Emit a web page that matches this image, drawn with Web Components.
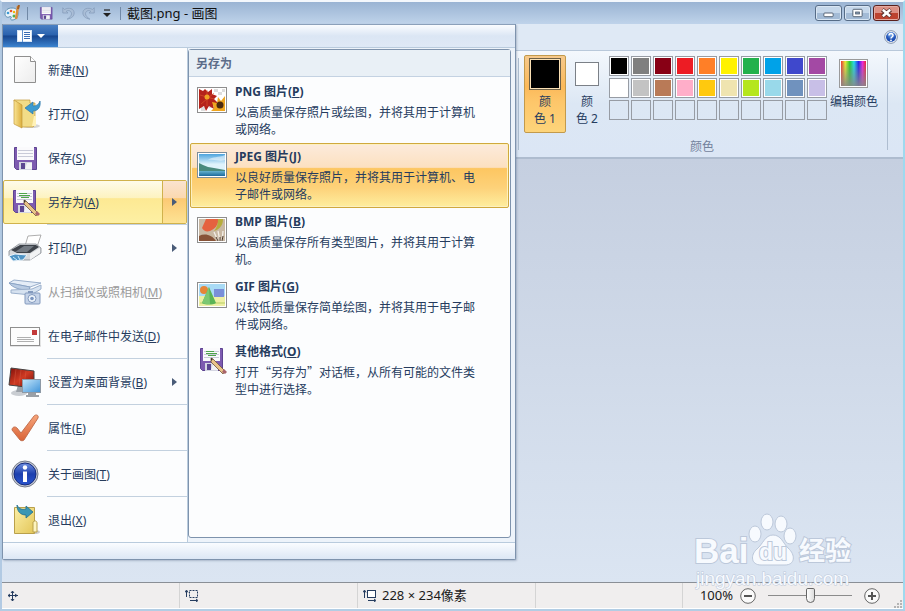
<!DOCTYPE html>
<html lang="zh-CN">
<head>
<meta charset="utf-8">
<title>截图.png - 画图</title>
<style>
    body {
        margin: 0;
        font: 12px/17px "Noto Sans", "Noto Sans CJK SC", sans-serif;
        color: #263c5e;
    }
</style>
</head>
<body>

<paint-window>
    <title-bar slot="title">截图.png - 画图</title-bar>
    <ribbon-bar slot="ribbon">
        <file-menu slot="menu">
            <menu-entry icon="new">新建(<u>N</u>)</menu-entry>
            <menu-entry icon="open">打开(<u>O</u>)</menu-entry>
            <menu-entry icon="save">保存(<u>S</u>)</menu-entry>
            <menu-entry icon="save-as" arrow active>另存为(<u>A</u>)</menu-entry>
            <menu-entry icon="print" arrow divided>打印(<u>P</u>)</menu-entry>
            <menu-entry icon="scanner" disabled>从扫描仪或照相机(<u>M</u>)</menu-entry>
            <menu-entry icon="mail">在电子邮件中发送(<u>D</u>)</menu-entry>
            <menu-entry icon="desktop" arrow divided>设置为桌面背景(<u>B</u>)</menu-entry>
            <menu-entry icon="check" divided>属性(<u>E</u>)</menu-entry>
            <menu-entry icon="about" divided>关于画图(<u>T</u>)</menu-entry>
            <menu-entry icon="exit" divided>退出(<u>X</u>)</menu-entry>

            <span slot="heading">另存为</span>
            <format-option slot="format" icon="png">
                <span slot="name">PNG 图片(<u>P</u>)</span>
                以高质量保存照片或绘图，并将其用于计算机或网络。
            </format-option>
            <format-option slot="format" icon="jpeg" active>
                <span slot="name">JPEG 图片(<u>J</u>)</span>
                以良好质量保存照片，并将其用于计算机、电子邮件或网络。
            </format-option>
            <format-option slot="format" icon="bmp">
                <span slot="name">BMP 图片(<u>B</u>)</span>
                以高质量保存所有类型图片，并将其用于计算机。
            </format-option>
            <format-option slot="format" icon="gif">
                <span slot="name">GIF 图片(<u>G</u>)</span>
                以较低质量保存简单绘图，并将其用于电子邮件或网络。
            </format-option>
            <format-option slot="format" icon="save-as">
                <span slot="name">其他格式(<u>O</u>)</span>
                打开“另存为”对话框，从所有可能的文件类型中进行选择。
            </format-option>
        </file-menu>
        <color-group>颜色</color-group>
    </ribbon-bar>
    <status-bar slot="status" zoom="100">228 × 234像素</status-bar>
    <site-mark slot="mark"></site-mark>
</paint-window>

<script>
const FLOPPY = `
    <path d="M4.500 4.500h22v22h-20l-2-2z" fill="#7d5bb0" stroke="#5d4391"/>
    <path d="M7 4h17v13H7z" fill="#fafafc"/>
    <path d="M8 7.500h15M8 10.500h15M8 13.500h15" stroke="#c9cbd8"/>
    <path d="M9 19h13v8H9z" fill="#d4d6e2"/>
    <path d="M11 20h4v6h-4z" fill="#5b4691"/>
    <path d="M17 20h5v6h-7z" fill="#fff" opacity=".7"/>`;

// Every drawing is [viewBox width, viewBox height, markup]
const ICONS = {
    "app": [16, 16, `
        <path d="M1 9C1 5 4 3 8 3s6 2 6 6-3 6-6 6c-1 0-2-1-1-2s0-2-2-1-4-1-4-3z" fill="#e9f3fa" stroke="#5f8fb0"/>
        <circle cx="4" cy="8" r="1.3" fill="#3c9ad5"/><circle cx="7" cy="6" r="1.3" fill="#e4572e"/>
        <circle cx="10" cy="7" r="1.2" fill="#f4b400"/><circle cx="10" cy="11" r="1.5" fill="#4caf50"/>
        <path d="M14 1l-2 13" stroke="#d98e3f" stroke-width="2.4"/><path d="M15 0l-1 4" stroke="#a55f20" stroke-width="2"/>`],
    "quick-save": [30, 30, FLOPPY],
    "undo": [16, 16, `<path d="M2 2v6h6L6 6c3-2 6 0 6 3 0 2-2 4-5 6 6-1 8-4 8-7 0-5-6-7-11-4z" fill="#a9bdd6" stroke="#8299b8" stroke-width=".8"/>`],
    "redo": [16, 16, `<path d="M14 2v6H8l2-2C7 4 4 6 4 9c0 2 2 4 5 6-6-1-8-4-8-7 0-5 6-7 11-4z" fill="#a9bdd6" stroke="#8299b8" stroke-width=".8"/>`],
    "customize": [8, 8, `<path d="M1 1h6" stroke="#222" stroke-width="1.2"/><path d="M0 4h8L4 8z" fill="#222"/>`],
    "minimize": [27, 15, `<rect x="8.500" y="7.500" width="10" height="4" rx="1" fill="#fff" stroke="#4c5a6c"/>`],
    "maximize": [27, 15, `<rect x="8.500" y="3.500" width="10" height="8" rx="1" fill="#fff" stroke="#4c5a6c"/><rect x="11.500" y="6.500" width="4" height="2" fill="#9db4cf" stroke="#4c5a6c"/>`],
    "close": [27, 15, `<path d="M9 4l9 7M18 4l-9 7" stroke="#5c3230" stroke-width="4.500"/><path d="M9.500 4l8 7M17.500 4l-8 7" stroke="#fff" stroke-width="2.600"/>`],
    "file": [28, 12, `
        <rect x=".5" y=".5" width="14" height="11" fill="#fff" stroke="#d7e6f7"/>
        <path d="M5.500 0v12" stroke="#5f90cc"/>
        <path d="M7 2.500h6M7 4.500h6M7 6.500h6M7 8.500h6" stroke="#3a6db4"/>
        <path d="M20 4h8l-4 4z" fill="#fff"/>`],
    "help": [14, 14, `
        <defs><radialGradient id="g" cy=".25"><stop stop-color="#7fb1f0"/><stop offset="1" stop-color="#1d4fb4"/></radialGradient></defs>
        <circle cx="7" cy="7" r="6.300" fill="#fff" stroke="#7e8fa8"/><circle cx="7" cy="7" r="5" fill="url(#g)"/>
        <path d="M5 5.500c0-3 4.200-2.600 4 0C9 7 7 7 7 8.500" fill="none" stroke="#fff" stroke-width="1.500"/><circle cx="7" cy="10.400" r=".9" fill="#fff"/>`],
    "new": [32, 32, `
        <defs><linearGradient id="g" x2="1" y2="1"><stop stop-color="#fff"/><stop offset="1" stop-color="#ececec"/></linearGradient></defs>
        <path d="M5.500 2.500h16l5 5v21h-21z" fill="url(#g)" stroke="#8f8f8f"/>
        <path d="M21.500 2.500v5h5" fill="#fff" stroke="#8f8f8f"/>`],
    "open": [32, 32, `
        <defs><linearGradient id="g" x2="1"><stop stop-color="#f9e596"/><stop offset="1" stop-color="#dcae3d"/></linearGradient></defs>
        <ellipse cx="22" cy="28" rx="9" ry="2" fill="#999" opacity=".4"/>
        <path d="M5 2h16v3h5v22l-2 2H12z" fill="#f2dc87" stroke="#c39a3b" stroke-width=".7"/>
        <path d="M5 2l8 5v23l-8-4z" fill="url(#g)" stroke="#c39a3b" stroke-width=".7"/>
        <path d="M25 18h2v10h-4z" fill="#fff2b8"/>
        <path d="M16 10l8-6v4c4 0 6-2 7-5 1 6-2 10-7 10v3z" fill="#3c9bd0" stroke="#2b76a8" stroke-width=".7"/>`],
    "save": [30, 30, FLOPPY],
    "save-as": [32, 32, `${FLOPPY}
        <path d="M10 9.500h11M12 11.500h8M10 7.500h8" stroke="#4ea54b"/>
        <path d="M15 14l2 1 12 12-2 3-12-12z" fill="#e9c489" stroke="#6f543a" stroke-width=".8"/>
        <path d="M15 14l2 1-2 2z" fill="#3d342d"/><path d="M28 25l3 3-2 2-3-2z" fill="#a9646b"/>`],
    "print": [34, 32, `
        <path d="M17 14L20 4l13-1-4 12z" fill="#fff" stroke="#999" stroke-width=".8"/>
        <path d="M1 19l10-7h17l5 4v5l-11 7H8L1 24z" fill="#d6d9dc" stroke="#777d84" stroke-width=".7"/>
        <path d="M3 18l9-5h16l3 2-9 6H9z" fill="#3e434a"/>
        <path d="M7 20l9-6h10l-7 6z" fill="#737a82"/>
        <path d="M22 22l10-6v5l-10 7z" fill="#f2f3f4"/>
        <path d="M1 24l6-2 12 1-4 5-10 1z" fill="#4f94c5" stroke="#e8f2fa"/>
        <path d="M5 25l4 3M10 24l2 4" stroke="#c9ecff"/>`],
    "scanner": [34, 32, `
        <path d="M1 7l5-3 27 3-11 4z" fill="#e5edf7" stroke="#9bb0cc"/>
        <path d="M1 7l6 1 15 3-1 3C12 14 5 12 1 7z" fill="#bacce3" stroke="#8ba4c5"/>
        <path d="M3 14l21-1 9-4v4l-10 6-20-2z" fill="#d6e2f0" stroke="#9bb0cc"/>
        <rect x="17" y="17" width="15" height="11" rx="1" fill="#c5d3e8" stroke="#8299bd"/>
        <path d="M20 15h5v2h-5z" fill="#8299bd"/>
        <circle cx="24" cy="22.500" r="4" fill="#eef4fb" stroke="#8299bd"/><circle cx="24" cy="22.500" r="1.800" fill="#7a95bf"/>`],
    "mail": [32, 32, `
        <path d="M1 26h31V9" fill="none" stroke="#ccc"/>
        <rect x="1.500" y="7.500" width="29" height="18" fill="#fdfdfd" stroke="#8f8f8f"/>
        <rect x="23" y="10" width="5" height="5" fill="#c33a3a"/>
        <path d="M8 17.500h14M8 19.500h17M8 21.500h17" stroke="#b0b0b0"/>`],
    "desktop": [34, 32, `
        <defs><linearGradient id="r" x2="1" y2="1"><stop stop-color="#7e0f0a"/><stop offset=".5" stop-color="#cf3a22"/><stop offset="1" stop-color="#6e0b08"/></linearGradient>
        <linearGradient id="b" x2="1" y2="1"><stop stop-color="#c4e6fb"/><stop offset="1" stop-color="#3f93d9"/></linearGradient></defs>
        <ellipse cx="11" cy="27" rx="8" ry="3" fill="#c9cdd2"/>
        <path d="M10 19l6 2v5H8z" fill="#9aa0a7"/>
        <path d="M3 2l23 3v17L1 19z" fill="url(#r)" stroke="#444"/>
        <path d="M8 3l-2 16M13 4l-2 16M18 5l-2 15" stroke="#e06a4e" opacity=".35"/>
        <path d="M20 26h8v3h3v2H18v-2h2z" fill="#9aa0a7"/>
        <rect x="14.500" y="13.500" width="18" height="13" fill="url(#b)" stroke="#8d99a6"/>`],
    "check": [32, 32, `
        <defs><linearGradient id="g" x2="0" y2="1"><stop stop-color="#f7a67c"/><stop offset="1" stop-color="#d96236"/></linearGradient></defs>
        <path d="M3 18c0-3 3-4 5-2l4 5L25 4c2-2 5-1 4 2L15 28c-1 1-3 1-4 0z" fill="url(#g)" stroke="#bd6a48" stroke-width=".9"/>`],
    "about": [32, 32, `
        <defs><linearGradient id="g" x2="0" y2="1"><stop stop-color="#6f8fe0"/><stop offset=".5" stop-color="#1c3fae"/><stop offset="1" stop-color="#2a55cf"/></linearGradient></defs>
        <circle cx="16" cy="16" r="13" fill="#c4c8d2" stroke="#777d8c"/><circle cx="16" cy="16" r="11" fill="url(#g)" stroke="#142a7c"/>
        <circle cx="16" cy="9.500" r="2.200" fill="#fff"/><path d="M14 13.500h4V24h-4z" fill="#fff"/>`],
    "exit": [32, 32, `
        <defs><linearGradient id="g" x2="1" y2="1"><stop stop-color="#fbefa6"/><stop offset="1" stop-color="#e3c659"/></linearGradient></defs>
        <ellipse cx="25" cy="28" rx="6" ry="2" fill="#999" opacity=".5"/>
        <path d="M5.500 3.500h20v26h-20z" fill="url(#g)" stroke="#b9a04b"/>
        <path d="M24 28V18c2-2 4-1 4 1v9z" fill="#fdf4bf" stroke="#b9a04b"/>
        <path d="M8 1c2 4 5 5 9 4V2l7 6-7 6v-3C11 11 8 7 8 1z" fill="#3b97b4" stroke="#236e8b" stroke-width=".8"/>`],
    "png": [30, 26, `
        <rect x=".5" y=".5" width="29" height="25" fill="#fff" stroke="#8e8e8e"/>
        <path d="M17 2h4v3h-4zM25 2h3v3h-3zM21 5h4v3h-4zM12 18h4v3h-4zM4 20h4v4H4z" fill="#ddd"/>
        <path d="M2 2l4 2 2-2 3 3 4-3v5l5 2-3 3 4 4-5 1 1 5-5-3-3 5-2-5-5 3z" fill="#b5231b"/>
        <path d="M3 8l14 4M10 3v16M4 17l13-11" stroke="#dd5a2c" stroke-width=".6"/>
        <circle cx="10" cy="10" r="2.500" fill="#f0a324"/>
        <path d="M15 15l5 1 1-6 3 4 4-5v15H14l3-3z" fill="#efa51e"/>
        <circle cx="23" cy="18" r="3.500" fill="#4b2a10"/>`],
    "jpeg": [30, 26, `
        <defs><linearGradient id="g" x2="0" y2="1"><stop stop-color="#4da4de"/><stop offset=".6" stop-color="#dff3fb"/></linearGradient>
        <linearGradient id="w" x2="0" y2="1"><stop stop-color="#74c0d8"/><stop offset="1" stop-color="#1c6a9c"/></linearGradient></defs>
        <rect x=".5" y=".5" width="29" height="25" fill="#fff" stroke="#7d8d99"/>
        <path d="M2 2h26v17H2z" fill="url(#g)"/><path d="M2 18h26v6H2z" fill="url(#w)"/>
        <path d="M11 8c5-4 10-2 17-5v5c-6 2-9-1-17 0z" fill="#fff" opacity=".5"/>
        <path d="M2 11l4 2 5 2 6 1 11 2v1H2z" fill="#4a8a7e"/>`],
    "bmp": [30, 26, `
        <rect x=".5" y=".5" width="29" height="25" fill="#fff" stroke="#8e8e8e"/>
        <path d="M2 2h26v22H2z" fill="#c9b9a4"/>
        <path d="M9 2h12c1 5-3 10-8 12-4 1-6 0-8-3z" fill="#e5623f"/>
        <path d="M21 2h5c0 6-3 10-9 12 3-4 4-7 4-12z" fill="#b7ad3d"/>
        <path d="M2 19c6-3 13-1 17 5H2z" fill="#875338"/>
        <path d="M17 15l4 9M21 14l2 10M26 14l-1 10" stroke="#f3efe8" stroke-width="1.300"/>
        <path d="M19 20l2 4M23 20v4M26 19l-1 5" stroke="#4a3628"/>`],
    "gif": [30, 26, `
        <rect x=".5" y=".5" width="29" height="25" fill="#fff" stroke="#8e8e8e"/>
        <path d="M2 2h26v13H2z" fill="#a9dbf5"/><path d="M2 14h26v10H2z" fill="#eef0a4"/>
        <path d="M3 20h25v2H3z" fill="#d3df84"/>
        <path d="M17 7h10v8H17z" fill="#7a8fd8"/><circle cx="7" cy="8" r="4" fill="#e58538"/>
        <path d="M12 5l7 16c-3 2-11 2-14 0z" fill="#5bb455"/><path d="M12 5l1 17c-3 0-6 0-8-1z" fill="#7cc872"/>`],
    "spectrum": [30, 30, `
        <defs><linearGradient id="h" x2="1"><stop stop-color="#e33"/><stop offset=".17" stop-color="#ee3"/><stop offset=".35" stop-color="#2c3"/><stop offset=".52" stop-color="#2de"/><stop offset=".7" stop-color="#22e"/><stop offset=".86" stop-color="#e2d"/><stop offset="1" stop-color="#e23"/></linearGradient>
        <linearGradient id="v" x2="0" y2="1"><stop stop-color="#888" stop-opacity="0"/><stop offset="1" stop-color="#888" stop-opacity=".9"/></linearGradient></defs>
        <rect x=".5" y=".5" width="28" height="28" fill="#fff" stroke="#9a9a9a"/>
        <path d="M2 2h25v25H2z" fill="url(#h)"/><path d="M2 2h25v25H2z" fill="url(#v)"/>`],
    "cursor": [12, 12, `<path d="M5.500 1v10M1 5.500h10" stroke="#253c5f"/><path d="M4 3l1.500-2L7 3M4 9l1.500 2L7 9M3 4L1 5.500 3 7M8 4l2 1.500L8 7" stroke="#253c5f"/>`],
    "selection": [14, 13, `<path d="M1.500 2v6M0 3.500L1.500 1 3 3.500M5 11.500h7M11 10l2 1.500L11 13" stroke="#253c5f"/><rect x="4.500" y="1.500" width="8" height="7" stroke="#253c5f" stroke-dasharray="2 1"/>`],
    "size": [14, 13, `<path d="M1.500 2v7M0 3.500L1.500 1 3 3.500M5 11.500h7M11 10l2 1.500L11 13" stroke="#253c5f"/><rect x="4.500" y="1.500" width="8" height="7" fill="#fff" stroke="#253c5f"/>`],
    "minus": [16, 16, `<circle cx="8" cy="8" r="7.300" fill="#fafafa" stroke="#666"/><path d="M4 7h8v2H4z" fill="#555"/>`],
    "plus": [16, 16, `<circle cx="8" cy="8" r="7.300" fill="#fafafa" stroke="#666"/><path d="M4 7h3V4h2v3h3v2H9v3H7V9H4z" fill="#555"/>`],
    "arrow": [5, 8, `<path d="M0 0l5 4-5 4z" fill="#4a5c78"/>`],
    "grip": [9, 9, `<path d="M7 1h2v2H7zM4 4h2v2H4zM7 4h2v2H7zM1 7h2v2H1zM4 7h2v2H4zM7 7h2v2H7z" fill="#b4b4b4"/>`]
};

class PaintElement extends HTMLElement {

    constructor() {
        super();
        this.attachShadow({mode: "open"});
    }

    connectedCallback() {
        this.shadowRoot.innerHTML = `
            <style>
                button { font: inherit; color: inherit; background: none; border: 0; padding: 0; margin: 0; }
                ${this.styles()}
            </style>
            ${this.render()}
        `;
    }
}

class PaintIcon extends HTMLElement {

    connectedCallback() {
        const [w, h, markup] = ICONS[this.getAttribute("name")];
        const width = this.getAttribute("width") || w;
        const height = Math.round(h * width / w);
        if (!this.shadowRoot) this.attachShadow({mode: "open"});
        this.shadowRoot.innerHTML = `
            <style>
                :host { display: inline-flex; flex: none; }
                svg { display: block; }
            </style>
            <svg width="${width}" height="${height}" viewBox="0 0 ${w} ${h}" fill="none" aria-hidden="true">${markup}</svg>
        `;
    }
}

class PaintWindow extends PaintElement {

    styles() {
        return `
            :host {
                display: flex;
                flex-direction: column;
                position: relative;
                box-sizing: border-box;
                min-height: 100vh;
                border: solid;
                border-width: 2px;
                border-color: #f4f8fc #9fd9ee #b2cde4 #b2cae3;
            }
            main {
                flex: 1;
                background: linear-gradient(#c5cfe0, #dbe5f2);
            }
        `;
    }

    render() {
        return `
            <slot name="title"></slot>
            <slot name="ribbon"></slot>
            <main></main>
            <slot name="status"></slot>
            <slot name="mark"></slot>
        `;
    }
}

class TitleBar extends PaintElement {

    styles() {
        return `
            :host {
                display: flex;
                align-items: center;
                height: 22px;
                padding: 0 3px 0 2px;
                background: linear-gradient(#9ab4d3, #bfd3ea);
                color: #111;
            }
            .quick {
                display: flex;
                align-items: center;
                gap: 7px;
                padding: 0 9px 0 10px;
                margin: 0 6px 0 7px;
                border: solid #7189a6;
                border-width: 0 1px;
                height: 13px;
            }
            .quick button, .controls button { display: flex; }
            h1 {
                flex: 1;
                margin: 0;
                font-size: 13px;
                font-weight: normal;
            }
            .controls {
                display: flex;
                gap: 2px;
            }
            .controls button {
                border: 1px solid #566c87;
                border-radius: 3px;
                box-shadow: inset 0 0 0 1px #d9e6f3;
                background: linear-gradient(#c5d7ea 50%, #a3bbd6 50%);
            }
            .controls .close {
                border-color: #5a1f1c;
                box-shadow: inset 0 0 0 1px #e4aba2;
                background: linear-gradient(#dc9085 50%, #bd4330 50%);
            }
        `;
    }

    render() {
        return `
            <paint-icon name="app"></paint-icon>
            <div class="quick">
                <button aria-label="保存"><paint-icon name="quick-save" width="16"></paint-icon></button>
                <button aria-label="撤消"><paint-icon name="undo" width="14"></paint-icon></button>
                <button aria-label="重做"><paint-icon name="redo" width="14"></paint-icon></button>
                <button aria-label="自定义快速访问工具栏"><paint-icon name="customize"></paint-icon></button>
            </div>
            <h1><slot></slot></h1>
            <div class="controls">
                <button aria-label="最小化"><paint-icon name="minimize" width="25"></paint-icon></button>
                <button aria-label="最大化"><paint-icon name="maximize" width="25"></paint-icon></button>
                <button class="close" aria-label="关闭"><paint-icon name="close" width="25"></paint-icon></button>
            </div>
        `;
    }
}

class RibbonBar extends PaintElement {

    styles() {
        return `
            :host { display: block; position: relative; }
            .tabs {
                display: flex;
                justify-content: flex-end;
                align-items: center;
                height: 26px;
                padding-right: 5px;
                background: #dfe9f5;
                border-bottom: 1px solid #b9c8da;
            }
            .tabs button { display: flex; }
            .groups {
                display: flex;
                justify-content: flex-end;
                padding-right: 15px;
                background: linear-gradient(#f4f8fd, #dce7f4 50%, #dbe6f5);
                border-bottom: 2px solid #aebccf;
            }
        `;
    }

    render() {
        return `
            <div class="tabs"><button aria-label="帮助"><paint-icon name="help"></paint-icon></button></div>
            <div class="groups"><slot></slot></div>
            <slot name="menu"></slot>
        `;
    }
}

class FileMenu extends PaintElement {

    styles() {
        return `
            /* The open menu lies over the ribbon and the drawing area */
            :host {
                position: absolute;
                top: 0;
                left: 0;
                z-index: 1;
                display: block;
                border: solid #7e93ad;
                border-width: 0 1px 1px;
                border-radius: 0 0 2px 2px;
                background: #fcfdfe;
                box-shadow: 1px 1px 2px rgba(60, 80, 110, .3);
            }
            .top {
                height: 24px;
                background: linear-gradient(#fafcff, #dbe6f4 50%, #dfe9f6);
                border: solid;
                border-width: 1px 0;
                border-color: #8ba0ba transparent #b9cbdd;
                box-sizing: border-box;
            }
            .top button {
                display: flex;
                justify-content: center;
                align-items: center;
                width: 55px;
                height: 22px;
                background: linear-gradient(#4a80c4, #2a62ae 45%, #17468f 50%, #3c84d0);
            }
            .body {
                display: flex;
                border-bottom: 1px solid #b9cbdd;
                background: #edf3fa;
            }
            nav {
                width: 184px;
                background: #fcfdfe;
                border-right: 1px solid #b9cbdd;
            }
            section {
                width: 321px;
                margin: 1px 4px 4px 0;
                border: 1px solid #7e93ad;
                border-radius: 3px;
                background: #fcfdfe;
            }
            h2 {
                margin: 0 0 1px;
                padding: 5px 7px 4px;
                font-size: 12px;
                color: #5b6c88;
                background: #e9f0f6;
                border-bottom: 1px solid #c4d2e2;
            }
            .foot {
                height: 16px;
                background: linear-gradient(#fafcff, #dce7f5);
            }
        `;
    }

    render() {
        return `
            <div class="top"><button aria-label="画图菜单"><paint-icon name="file"></paint-icon></button></div>
            <div class="body">
                <nav><slot></slot></nav>
                <section>
                    <h2><slot name="heading"></slot></h2>
                    <slot name="format"></slot>
                </section>
            </div>
            <div class="foot"></div>
        `;
    }
}

class MenuEntry extends PaintElement {

    styles() {
        return `
            :host { display: block; }
            :host([divided])::before {
                content: "";
                display: block;
                height: 1px;
                margin: 0 0 1px 44px;
                background: #c3d1df;
            }
            button {
                display: flex;
                align-items: stretch;
                width: 100%;
                height: 44px;
                border: 1px solid transparent;
                border-radius: 2px;
                text-align: left;
            }
            .label {
                flex: 1;
                display: flex;
                align-items: center;
                gap: 7px;
                padding-left: 5px;
                white-space: nowrap;
            }
            .picture {
                display: flex;
                justify-content: center;
                width: 32px;
            }
            .more {
                display: flex;
                justify-content: center;
                align-items: center;
                width: 23px;
                border-left: 1px solid transparent;
            }
            button:disabled { color: #9a9a9a; }
            :host([active]) button {
                border-color: #d0b24c;
                background: linear-gradient(#fefbea, #fdf3c0 40%, #fde993 42%, #fdf0a4);
            }
            :host([active]) .more {
                border-color: #d0b24c;
                background: linear-gradient(#fae3cf, #fbd9b0 40%, #fcc973 42%, #fde394);
            }
        `;
    }

    render() {
        const arrow = this.hasAttribute("arrow") ? `<span class="more"><paint-icon name="arrow"></paint-icon></span>` : "";
        return `
            <button ${this.hasAttribute("disabled") ? "disabled" : ""}>
                <span class="label">
                    <span class="picture"><paint-icon name="${this.getAttribute("icon")}"></paint-icon></span>
                    <span><slot></slot></span>
                </span>
                ${arrow}
            </button>
        `;
    }
}

class FormatOption extends PaintElement {

    styles() {
        return `
            :host { display: block; margin: 0 1px; }
            button {
                display: flex;
                gap: 8px;
                width: 100%;
                padding: 4px 30px 5px 6px;
                border: 1px solid transparent;
                border-radius: 2px;
                text-align: left;
            }
            .picture {
                display: flex;
                justify-content: center;
                align-items: center;
                width: 30px;
                height: 34px;
            }
            strong { display: block; margin-bottom: 3px; }
            .text {
                display: block;
                width: 246px;
                min-height: 34px;
                font-family: "Noto Sans CJK SC", sans-serif;
            }
            :host([active]) button {
                border-color: #d0a93e;
                box-shadow: inset 0 0 0 1px #fdf0c0;
                background: linear-gradient(#fcebdc, #fce0c0 37%, #fdc661 39%, #fdd27a 70%, #feee9f);
            }
        `;
    }

    render() {
        return `
            <button>
                <span class="picture"><paint-icon name="${this.getAttribute("icon")}"></paint-icon></span>
                <span>
                    <strong><slot name="name"></slot></strong>
                    <span class="text"><slot></slot></span>
                </span>
            </button>
        `;
    }
}

class ColorGroup extends PaintElement {

    static colors = [
        "#000000", "#7f7f7f", "#880015", "#ed1c24", "#ff7f27", "#fff200", "#22b14c", "#00a2e8", "#3f48cc", "#a349a4",
        "#ffffff", "#c3c3c3", "#b97a57", "#ffaec9", "#ffc90e", "#efe4b0", "#b5e61d", "#99d9ea", "#7092be", "#c8bfe7"
    ];

    styles() {
        return `
            :host {
                display: block;
                padding: 4px 8px 2px 6px;
                background:
                    linear-gradient(#aebdd0, #aebdd0) 0 50% / 1px 92px no-repeat,
                    linear-gradient(#aebdd0, #aebdd0) 100% 50% / 1px 92px no-repeat;
            }
            .tools {
                display: flex;
                align-items: flex-start;
            }
            .pick, .edit {
                display: flex;
                flex-direction: column;
                align-items: center;
                gap: 3px;
                box-sizing: border-box;
                width: 42px;
                padding: 2px 0 5px;
                border: 1px solid transparent;
                border-radius: 2px;
                white-space: nowrap;
            }
            .pick.on {
                border-color: #c29a4c;
                background: linear-gradient(#f6c98c, #fbb95a 40%, #fdc66a 60%, #fdd47a);
            }
            .edit { width: 52px; }
            .well {
                display: flex;
                justify-content: center;
                align-items: center;
                height: 32px;
            }
            .ink {
                box-sizing: border-box;
                width: 24px;
                height: 24px;
                background: #fff;
                border: 1px solid #7b8087;
            }
            .on .ink {
                width: 32px;
                height: 32px;
                padding: 1px;
                background: #000 content-box;
                border-color: #6d6046;
                box-shadow: inset 0 0 0 1px #fbe0b4;
            }
            .palette {
                display: grid;
                grid-template-columns: repeat(10, 20px);
                grid-auto-rows: 20px;
                gap: 2px;
                padding: 1px 1px 0;
            }
            .palette button {
                border: 1px solid #979ca4;
                box-shadow: inset 0 0 0 1px #fff;
            }
            .palette .empty { box-shadow: none; }
            h3 {
                margin: 5px 0 0;
                font: inherit;
                text-align: center;
                color: #73829c;
            }
        `;
    }

    render() {
        const filled = ColorGroup.colors.map(c => `<button style="background:${c}" aria-label="${c}"></button>`).join("");
        const empty = `<button class="empty" aria-label="空"></button>`.repeat(10);
        return `
            <div class="tools">
                <button class="pick on"><span class="well"><span class="ink"></span></span><span>颜<br>色 1</span></button>
                <button class="pick"><span class="well"><span class="ink"></span></span><span>颜<br>色 2</span></button>
                <div class="palette">${filled}${empty}</div>
                <button class="edit"><span class="well"><paint-icon name="spectrum"></paint-icon></span><span>编辑颜色</span></button>
            </div>
            <h3><slot></slot></h3>
        `;
    }
}

class StatusBar extends PaintElement {

    styles() {
        return `
            :host {
                display: flex;
                align-items: stretch;
                height: 25px;
                border-top: 1px solid #8a8f96;
                border-bottom: 1px solid #fff;
                background: #f0eeee;
                color: #1a1a1a;
                font-size: 13px;
            }
            .cell {
                display: flex;
                align-items: center;
                gap: 5px;
                box-sizing: border-box;
                width: 178px;
                padding-left: 5px;
                border-right: 1px solid #d4d4d4;
            }
            .spacer {
                flex: 1;
                border-right: 1px solid #d4d4d4;
            }
            .zoom {
                display: flex;
                align-items: center;
                gap: 7px;
                padding: 0 1px 0 17px;
            }
            .zoom button { display: flex; }
            .grip { align-self: flex-end; margin-left: 6px; }
            input {
                appearance: none;
                width: 94px;
                height: 16px;
                margin: 0;
                padding: 0 5px;
                box-sizing: border-box;
                background: linear-gradient(#8b8b8b, #8b8b8b) 50% 50% / 84px 1px no-repeat;
            }
            input::-webkit-slider-thumb {
                appearance: none;
                width: 9px;
                height: 15px;
                border: 1px solid #666;
                border-radius: 2px 2px 5px 5px;
                background: linear-gradient(90deg, #fff, #dcdcdc);
            }
        `;
    }

    render() {
        return `
            <div class="cell"><paint-icon name="cursor"></paint-icon></div>
            <div class="cell"><paint-icon name="selection"></paint-icon></div>
            <div class="cell"><paint-icon name="size"></paint-icon><span><slot></slot></span></div>
            <div class="spacer"></div>
            <div class="zoom">
                <label for="zoom">${this.getAttribute("zoom")}%</label>
                <button aria-label="缩小"><paint-icon name="minus"></paint-icon></button>
                <input id="zoom" type="range" min="0" max="${2 * this.getAttribute("zoom")}" value="${this.getAttribute("zoom")}">
                <button aria-label="放大"><paint-icon name="plus"></paint-icon></button>
                <paint-icon class="grip" name="grip"></paint-icon>
            </div>
        `;
    }
}

class SiteMark extends PaintElement {

    styles() {
        return `
            :host {
                position: absolute;
                right: 43px;
                bottom: 19px;
                pointer-events: none;
            }
            svg { display: block; }
            text {
                font-family: "Liberation Sans", "Noto Sans CJK SC", sans-serif;
                font-weight: bold;
                paint-order: stroke;
            }
            .address { font-weight: normal; }
        `;
    }

    render() {
        return `
            <svg width="170" height="80" viewBox="0 0 170 80" fill="#f7fafe" stroke="#bcc8da" stroke-width="2">
                <g stroke-width="1">
                    <ellipse cx="77" cy="12" rx="6" ry="8"/>
                    <ellipse cx="91" cy="14" rx="6" ry="8"/>
                    <ellipse cx="65" cy="24" rx="6" ry="8"/>
                    <ellipse cx="100" cy="26" rx="6" ry="8"/>
                    <path d="M83 25c8 0 10 8 15 13 8 7 7 17-3 17H71c-10 0-11-10-4-16 6-5 8-14 16-14z"/>
                </g>
                <text x="4" y="53" font-size="35">Bai</text>
                <text x="69" y="50" font-size="23" fill="#f7fafe">du</text>
                <text x="109" y="50" font-size="26">经验</text>
                <text class="address" x="6" y="75" font-size="19" stroke-width="1">jingyan.baidu.com</text>
            </svg>
        `;
    }
}

window.customElements.define("paint-icon", PaintIcon);
window.customElements.define("paint-window", PaintWindow);
window.customElements.define("title-bar", TitleBar);
window.customElements.define("ribbon-bar", RibbonBar);
window.customElements.define("file-menu", FileMenu);
window.customElements.define("menu-entry", MenuEntry);
window.customElements.define("format-option", FormatOption);
window.customElements.define("color-group", ColorGroup);
window.customElements.define("status-bar", StatusBar);
window.customElements.define("site-mark", SiteMark);
</script>
</body>
</html>
